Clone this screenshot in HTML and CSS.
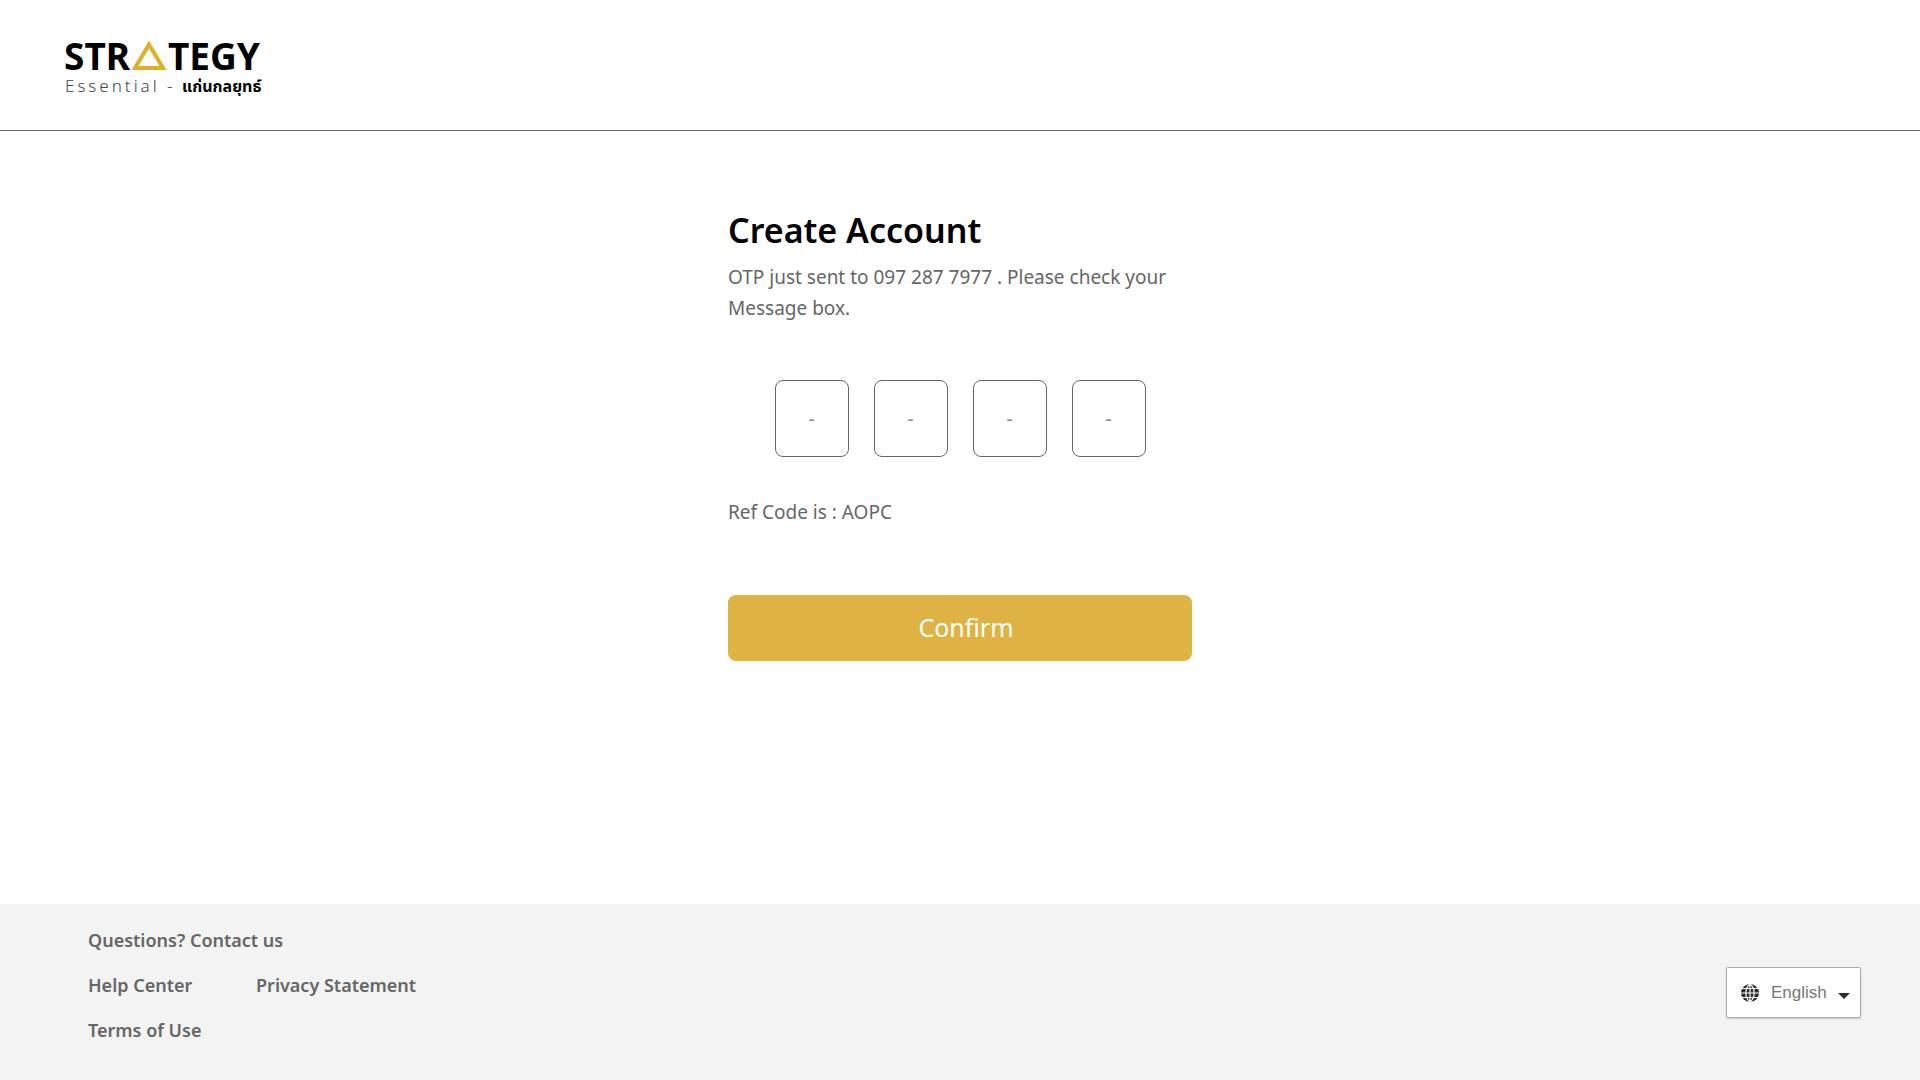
FILE: index.html
```html
<!DOCTYPE html>
<html lang="en">
<head>
<meta charset="utf-8">
<meta name="viewport" content="width=device-width, initial-scale=1">
<title>Create Account</title>
<link rel="stylesheet" href="styles.css">
</head>
<body>
<header class="header">
  <a class="brand" href="#" aria-label="Strategy Essential">
    <svg class="logo" width="220" height="82" viewBox="0 0 220 82">
      <text class="logo-name" x="0" y="46">STR</text>
      <path d="M85 20.500L99 44H71Z" fill="none" stroke="#e0af25" stroke-width="4"/>
      <text class="logo-name" x="104" y="46">TEGY</text>
      <text class="logo-sub" x="1" y="68">Essential -</text>
      <text class="logo-thai" x="118" y="68">แก่นกลยุทธ์</text>
    </svg>
  </a>
</header>
<main class="main">
  <form class="card">
    <h1 class="title">Create Account</h1>
    <p class="text">OTP just sent to 097 287 7977 . Please check your Message box.</p>
    <div class="otp">
      <input class="digit" type="text" maxlength="1" placeholder="-" aria-label="Digit 1">
      <input class="digit" type="text" maxlength="1" placeholder="-" aria-label="Digit 2">
      <input class="digit" type="text" maxlength="1" placeholder="-" aria-label="Digit 3">
      <input class="digit" type="text" maxlength="1" placeholder="-" aria-label="Digit 4">
    </div>
    <p class="text">Ref Code is : AOPC</p>
    <button class="confirm" type="button">Confirm</button>
  </form>
</main>
<footer class="footer">
  <nav class="links">
    <a class="link link-wide" href="#">Questions? Contact us</a>
    <a class="link" href="#">Help Center</a>
    <a class="link" href="#">Privacy Statement</a>
    <a class="link" href="#">Terms of Use</a>
  </nav>
  <div class="language">
    <svg class="globe" width="18" height="18" viewBox="0 0 18 18">
      <circle cx="9" cy="9" r="9" fill="#2b2b2b"/>
      <path d="M9 0V18M0 9H18M1 4.500H17M1 13.500H17M9 0C3.500 4 3.500 14 9 18M9 0C14.500 4 14.500 14 9 18" fill="none" stroke="#fff" stroke-width="1.200"/>
    </svg>
    <select class="select" aria-label="Language">
      <option>English</option>
    </select>
    <svg class="caret" width="12" height="6" viewBox="0 0 12 6"><path d="M0 0H12L6 6Z" fill="#2b2b2b"/></svg>
  </div>
</footer>
</body>
</html>
```
FILE: styles.css
```css
* {
  box-sizing: border-box;
}

body {
  margin: 0;
  min-height: 100vh;
  display: flex;
  flex-direction: column;
  background: #fff;
  color: #666;
  font-family: "Noto Sans", "Open Sans", sans-serif;
}

.header {
  padding: 24px 64px;
  border-bottom: 1px solid #666;
}

.brand,
.logo {
  display: block;
  width: 220px;
}

.logo-name {
  font: 700 37px "Noto Sans", sans-serif;
  fill: #000;
}

.logo-sub {
  font: 300 17px "Noto Sans", sans-serif;
  letter-spacing: 3px;
  fill: #444;
}

.logo-thai {
  font: 700 16px "Noto Sans Thai", "Noto Sans", sans-serif;
  fill: #000;
}

.main {
  flex: 1;
  padding: 73px 24px;
}

.card {
  max-width: 464px;
  margin: 0 auto;
}

.title {
  margin: 0 0 6px;
  font-size: 34px;
  line-height: 52px;
  font-weight: 600;
  color: #000;
}

.text {
  margin: 0;
  font-size: 19px;
  line-height: 31px;
}

.otp {
  display: flex;
  justify-content: center;
  gap: 25px;
  margin: 56px 0 40px;
}

.digit {
  width: 74px;
  height: 77px;
  padding: 0;
  border: 1px solid #666;
  border-radius: 8px;
  background: #fff;
  color: #666;
  font: 19px "Noto Sans", sans-serif;
  text-align: center;
}

.digit::placeholder {
  color: #888;
  opacity: 1;
}

.confirm {
  display: block;
  width: 100%;
  height: 66px;
  margin-top: 67px;
  padding: 0 0 2px 12px;
  border: 0;
  border-radius: 8px;
  background: #dfb343;
  color: #fff;
  font: 25px "Noto Sans", sans-serif;
}

.footer {
  display: flex;
  align-items: center;
  justify-content: space-between;
  padding: 14px 59px 13px 88px;
  background: #f3f3f3;
}

.links {
  display: grid;
  grid-template-columns: 168px auto;
  padding-bottom: 14px;
}

.link {
  color: #666;
  font-size: 18px;
  line-height: 45px;
  font-weight: 600;
  text-decoration: none;
}

.link-wide {
  grid-column: 1 / -1;
}

.language {
  display: grid;
  grid-template-columns: 44px 67px 22px;
  align-items: center;
  border: 1px solid #aaa;
  border-radius: 2px;
  background: #fff;
  box-shadow: 0 1px 2px #ccc;
}

.globe,
.select,
.caret {
  grid-row: 1;
}

.globe {
  grid-column: 1;
  margin-left: 14px;
}

.select {
  grid-column: 1 / -1;
  height: 49px;
  padding: 0 0 0 44px;
  border: 0;
  appearance: none;
  background: transparent;
  color: #777;
  font: 17px "Liberation Sans", sans-serif;
}

.caret {
  grid-column: 3;
  margin-top: 6px;
}
```
